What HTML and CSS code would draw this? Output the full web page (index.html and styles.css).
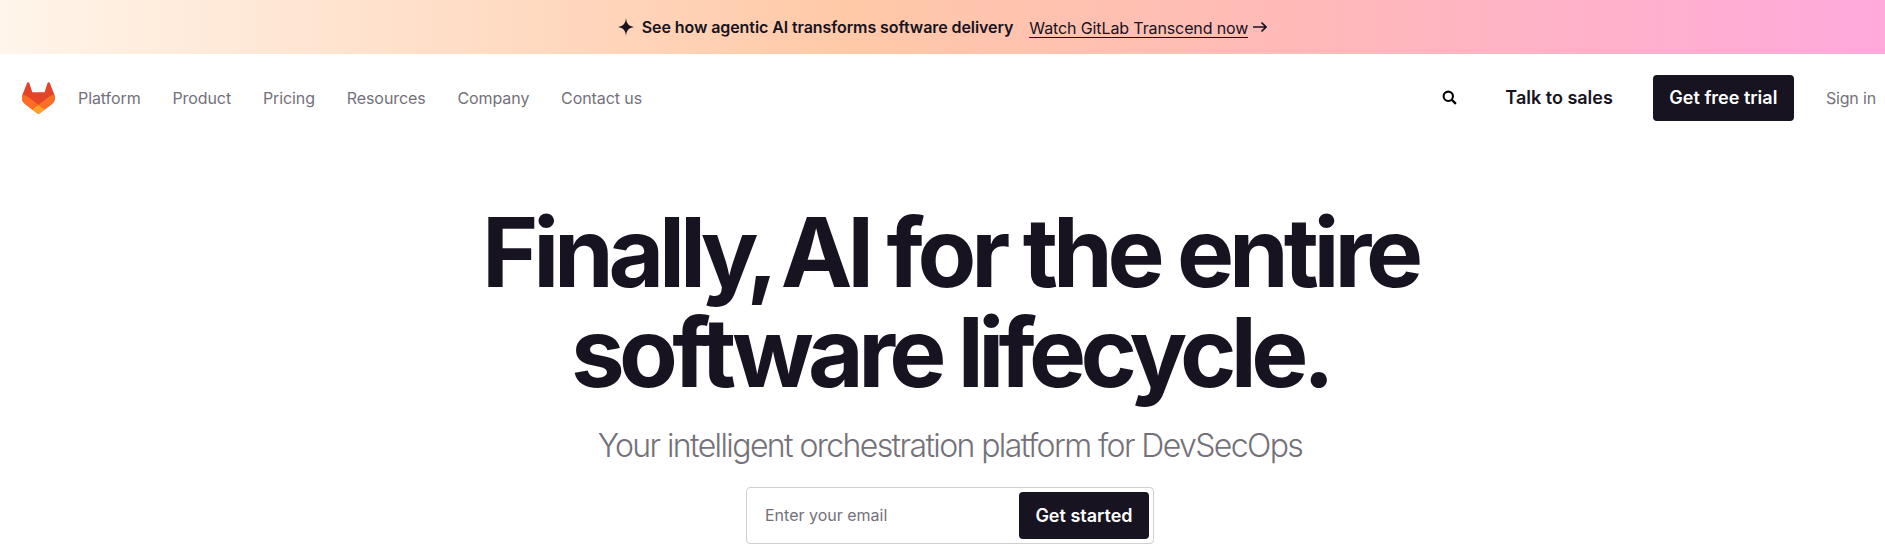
FILE: index.html
```html
<!DOCTYPE html>
<html lang="en">
<head>
    <meta charset="UTF-8">
    <meta name="viewport" content="width=device-width, initial-scale=1.0">
    <title>The DevSecOps Platform</title>
    <link rel="stylesheet" href="styles.css">
</head>
<body>
    <div class="promo">
        <svg class="promo-star" viewBox="0 0 16 18" width="16" height="18"><path d="M8 0 C8.5 5.6 10.6 8.2 16 9 C10.6 9.8 8.5 12.4 8 18 C7.5 12.4 5.4 9.8 0 9 C5.4 8.2 7.5 5.6 8 0 Z"/></svg>
        <strong class="promo-title">See how agentic AI transforms software delivery</strong>
        <a class="promo-link" href="#">Watch GitLab Transcend now</a>
        <svg class="promo-arrow" viewBox="0 0 14 12" width="14" height="12"><path d="M0 6H12.5M8.5 1.5L13 6L8.5 10.5" fill="none" stroke="#171321" stroke-width="1.7"/></svg>
    </div>

    <header class="nav">
        <a class="logo" href="#">
            <svg viewBox="0 0 25 24" width="33" height="32">
                <path fill="#e24329" d="m24.507 9.5-.034-.09L21.082.562a.896.896 0 0 0-1.694.091l-2.29 7.01H7.825L5.535.653a.898.898 0 0 0-1.694-.09L.451 9.411.416 9.5a6.297 6.297 0 0 0 2.09 7.278l.012.01.03.022 5.16 3.867 2.56 1.935 1.554 1.176a1.051 1.051 0 0 0 1.268 0l1.555-1.176 2.56-1.935 5.197-3.89.014-.01A6.297 6.297 0 0 0 24.507 9.5Z"/>
                <path fill="#fc6d26" d="m24.507 9.5-.034-.09a11.44 11.44 0 0 0-4.56 2.051l-7.447 5.632 4.742 3.584 5.197-3.89.014-.01A6.297 6.297 0 0 0 24.507 9.5Z"/>
                <path fill="#fca326" d="m7.707 20.677 2.56 1.935 1.555 1.176a1.051 1.051 0 0 0 1.268 0l1.555-1.176 2.56-1.935-4.743-3.584-4.755 3.584Z"/>
                <path fill="#fc6d26" d="M5.01 11.461a11.43 11.43 0 0 0-4.56-2.05L.416 9.5a6.297 6.297 0 0 0 2.09 7.278l.012.01.03.022 5.16 3.867 4.745-3.584-7.444-5.632Z"/>
            </svg>
        </a>
        <nav class="nav-links">
            <a href="#">Platform</a>
            <a href="#">Product</a>
            <a href="#">Pricing</a>
            <a href="#">Resources</a>
            <a href="#">Company</a>
            <a href="#">Contact us</a>
        </nav>
        <div class="nav-actions">
            <svg class="search-icon" viewBox="0 0 16 16" width="15" height="15"><circle cx="6.7" cy="6.7" r="5" fill="none" stroke="#000" stroke-width="2.2"/><path d="M10.5 10.5L14.8 14.8" stroke="#000" stroke-width="2.4"/></svg>
            <a class="talk" href="#">Talk to sales</a>
            <a class="btn btn-trial" href="#">Get free trial</a>
            <a class="sign-in" href="#">Sign in</a>
        </div>
    </header>

    <main class="hero">
        <h1>Finall<span class="kern">y, </span>AI for the entire<br>software lifecycle.</h1>
        <p class="lead">Your intelligent orchestration platform for DevSecOps</p>
        <form class="signup">
            <input class="email" type="text" placeholder="Enter your email">
            <button class="btn btn-start" type="button">Get started</button>
        </form>
    </main>
</body>
</html>
```

FILE: styles.css
```css
* {
    box-sizing: border-box;
}
body {
    margin: 0;
    height: 559px;
    overflow: hidden;
    font-family: Inter, "Liberation Sans", sans-serif;
    color: #171321;
    background: white;
}
a {
    color: inherit;
    text-decoration: none;
}
.promo {
    height: 54px;
    display: flex;
    align-items: center;
    justify-content: center;
    font-size: 16px;
    background: linear-gradient(90deg, #fff5ea 0%, #ffc9a8 45%, #ffb9b9 70%, #ffa9dc 100%);
}
.promo-star {
    margin-right: 8px;
    fill: #171321;
}
.promo-title {
    font-weight: 600;
    letter-spacing: -0.005em;
    margin-right: 16px;
}
.promo-link {
    border-bottom: 1px solid #171321;
    line-height: 18px;
    margin-top: 2px;
    letter-spacing: -0.007em;
}
.promo-arrow {
    margin-left: 5px;
}
.nav {
    height: 87px;
    display: flex;
    align-items: center;
    padding: 0 9px 0 22px;
}
.logo {
    display: flex;
    margin-right: 23px;
}
.nav-links {
    display: flex;
    gap: 31.8px;
    font-size: 16px;
    letter-spacing: -0.005em;
    color: #74717a;
}
.nav-actions {
    margin-left: auto;
    display: flex;
    align-items: center;
}
.search-icon {
    margin-right: 48px;
}
.talk {
    font-size: 18px;
    font-weight: 600;
    margin-right: 40px;
}
.btn {
    background: #171321;
    color: white;
    font-family: inherit;
    font-weight: 600;
    border: none;
    border-radius: 4px;
    display: flex;
    align-items: center;
    justify-content: center;
}
.btn-trial {
    width: 141px;
    height: 46px;
    font-size: 18px;
    margin-right: 32px;
}
.sign-in {
    font-size: 16px;
    color: #74717a;
    letter-spacing: -0.01em;
}
.hero {
    display: flex;
    flex-direction: column;
    align-items: center;
    padding-left: 15px;
}
h1 {
    margin: 61px 0 0;
    font-size: 96px;
    line-height: 100px;
    font-weight: 700;
    letter-spacing: -0.059em;
    text-align: center;
}
h1::first-line {
    letter-spacing: -0.054em;
}
.kern {
    letter-spacing: -0.09em;
}
.lead {
    margin: 24px 0 0;
    font-size: 32px;
    line-height: 40px;
    font-weight: 300;
    letter-spacing: -0.05em;
    color: #74717a;
}
.signup {
    margin-top: 21px;
    width: 408px;
    height: 57px;
    border: 1px solid #cfcfcf;
    border-radius: 4px;
    padding: 4px;
    display: flex;
}
.email {
    flex: 1;
    min-width: 0;
    border: none;
    outline: none;
    padding: 0 14px 2px;
    font-family: inherit;
    font-size: 16px;
}
.email::placeholder {
    color: #74717a;
}
.btn-start {
    width: 130px;
    height: 47px;
    font-size: 18px;
}
```
